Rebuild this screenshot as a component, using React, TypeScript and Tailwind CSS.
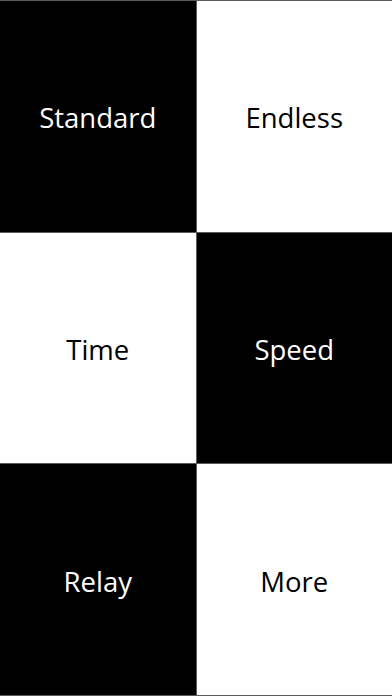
import React from "react";

const tiles = [
  { label: "Standard", dark: true },
  { label: "Endless", dark: false },
  { label: "Time", dark: false },
  { label: "Speed", dark: true },
  { label: "Relay", dark: true },
  { label: "More", dark: false },
];

export default function App() {
  return (
    <div className="w-[392px] h-[696px] bg-[#5a5a5a] py-px grid grid-cols-2 grid-rows-3 gap-px" style={{ fontFamily: '"Open Sans", "Noto Sans", sans-serif' }}>
      {tiles.map((t) => (
        <div
          key={t.label}
          className={
            t.dark
              ? "bg-black text-white flex items-center justify-center pt-[3px] text-[27.5px]"
              : "bg-white text-black flex items-center justify-center pt-[3px] text-[27.5px]"
          }
        >
          {t.label}
        </div>
      ))}
    </div>
  );
}
